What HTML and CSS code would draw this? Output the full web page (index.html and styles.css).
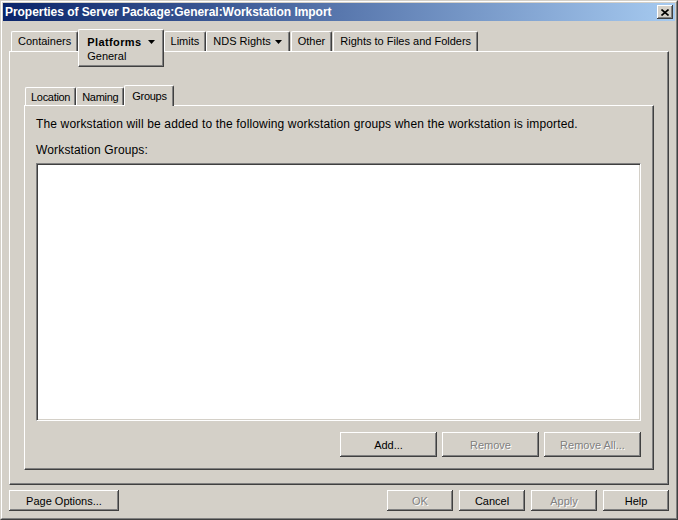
FILE: index.html
```html
<!DOCTYPE html>
<html lang="en">

<head>
  <meta charset="UTF-8">
  <title>Properties of Server Package:General:Workstation Import</title>
  <link rel="stylesheet" href="styles.css">
</head>

<body>
  <div class="window">
    <div class="window-frame">
      <div class="titlebar">
        <span class="title">Properties of Server Package:General:Workstation Import</span>
        <button class="close" type="button">
          <svg width="8" height="7" viewBox="0 0 8 7">
            <path d="M0.5 0.5 L7.5 6.5 M7.5 0.5 L0.5 6.5" stroke="#000" stroke-width="1.6" fill="none"/>
          </svg>
        </button>
      </div>

      <div class="content">
        <div class="tabs main-tabs">
          <div class="tab">Containers</div>
          <div class="tab active">
            <span class="tab-label">Platforms</span>
            <svg class="arrow" width="7" height="4" viewBox="0 0 7 4"><polygon points="0,0 7,0 3.5,4" fill="#000"/></svg>
            <div class="tab-menu">General</div>
          </div>
          <div class="tab">Limits</div>
          <div class="tab tab-drop">
            NDS Rights
            <svg class="arrow arrow-near" width="7" height="4" viewBox="0 0 7 4"><polygon points="0,0 7,0 3.5,4" fill="#000"/></svg>
          </div>
          <div class="tab tab-gap">Other</div>
          <div class="tab tab-gap">Rights to Files and Folders</div>
        </div>

        <div class="panel main-panel">
          <div class="tabs sub-tabs">
            <div class="tab">Location</div>
            <div class="tab">Naming</div>
            <div class="tab active">Groups</div>
          </div>

          <div class="panel sub-panel">
            <p class="intro">The workstation will be added to the following workstation groups when the workstation is imported.</p>
            <div class="field-label">Workstation Groups:</div>
            <div class="listbox"></div>
            <div class="list-buttons">
              <button class="btn btn-wide" type="button">Add...</button>
              <button class="btn btn-wide" type="button" disabled>Remove</button>
              <button class="btn btn-wide" type="button" disabled>Remove All...</button>
            </div>
          </div>
        </div>

        <div class="footer">
          <button class="btn btn-options" type="button">Page Options...</button>
          <div class="footer-right">
            <button class="btn" type="button" disabled>OK</button>
            <button class="btn" type="button">Cancel</button>
            <button class="btn" type="button" disabled>Apply</button>
            <button class="btn" type="button">Help</button>
          </div>
        </div>
      </div>
    </div>
  </div>
</body>

</html>
```

FILE: styles.css
```css
body {
  margin: 0;
  font-family: "Liberation Sans", Arial, sans-serif;
  font-size: 11px;
  line-height: 13px;
  color: #000000;
  background-color: #d4d0c8;
}

.window {
  width: 678px;
  height: 520px;
  box-sizing: border-box;
  background-color: #d4d0c8;
  border: 1px solid;
  border-color: #d4d0c8 #404040 #404040 #d4d0c8;
}

.window-frame {
  height: 100%;
  box-sizing: border-box;
  border: 1px solid;
  border-color: #ffffff #808080 #808080 #ffffff;
  padding: 1px;
  display: flex;
  flex-direction: column;
}

.titlebar {
  height: 18px;
  flex: none;
  display: flex;
  align-items: center;
  justify-content: space-between;
  padding: 0 2px;
  background: linear-gradient(to right, #0a246a, #a6caf0);
  color: #ffffff;
  font-size: 12px;
  font-weight: bold;
  letter-spacing: -0.05px;
}

.title {
  padding-top: 1px;
  white-space: nowrap;
}

.close {
  width: 16px;
  height: 14px;
  padding: 0;
  border: none;
  background-color: #d4d0c8;
  display: flex;
  align-items: center;
  justify-content: center;
  box-shadow: inset -1px -1px #404040, inset 1px 1px #ffffff, inset -2px -2px #808080;
}

.content {
  flex: 1;
  padding: 8px 6px 0;
  display: flex;
  flex-direction: column;
}

/* tabs */
.tabs {
  display: flex;
  align-items: flex-end;
  flex: none;
}

.main-tabs {
  height: 22px;
  padding-left: 2px;
}

.sub-tabs {
  height: 20px;
  padding-left: 1px;
  letter-spacing: -0.3px;
}

.tab {
  height: 20px;
  box-sizing: border-box;
  padding: 0 6px;
  display: flex;
  align-items: center;
  white-space: nowrap;
  background-color: #d4d0c8;
  border-top: 1px solid #ffffff;
  border-left: 1px solid #ffffff;
  border-right: 1px solid #404040;
  border-radius: 2px 2px 0 0;
  box-shadow: inset -1px 0 #808080;
}

.tab-gap {
  margin-left: 1px;
}

.tab-drop {
  padding-right: 7px;
}

.sub-tabs .tab {
  height: 18px;
  padding: 2px 5px 0;
}

.main-tabs .tab.active {
  position: relative;
  z-index: 1;
  height: 22px;
  align-items: flex-start;
  padding: 6px 8px 0 8px;
  font-weight: bold;
}

.tab-label {
  letter-spacing: 0.4px;
}

.sub-tabs .tab.active {
  position: relative;
  z-index: 1;
  height: 21px;
  margin-bottom: -1px;
  padding: 1px 6px 1px 7px;
}

.arrow {
  margin: 4px 0 0 6px;
}

.arrow-near {
  margin: 1px 0 0 4px;
}

.tab-menu {
  position: absolute;
  left: -1px;
  right: -1px;
  top: 21px;
  height: 15px;
  padding-left: 8px;
  line-height: 10px;
  font-weight: normal;
  background-color: #d4d0c8;
  border-left: 1px solid #ffffff;
  border-right: 1px solid #404040;
  border-bottom: 1px solid #404040;
  box-shadow: inset -1px -1px #808080;
}

/* panels */
.panel {
  box-sizing: border-box;
  background-color: #d4d0c8;
  border: 1px solid;
  border-color: #ffffff #404040 #404040 #ffffff;
  box-shadow: inset -1px -1px #808080;
}

.main-panel {
  height: 434px;
  padding: 33px 14px 14px;
  display: flex;
  flex-direction: column;
}

.sub-panel {
  height: 365px;
  padding: 11px 12px 12px 11px;
  display: flex;
  flex-direction: column;
  font-size: 12px;
  line-height: 14px;
  letter-spacing: 0.15px;
}

.intro {
  margin: 0;
  white-space: nowrap;
}

.field-label {
  margin-top: 12px;
}

.listbox {
  margin-top: 6px;
  height: 258px;
  box-sizing: border-box;
  background-color: #ffffff;
  border: 1px solid;
  border-color: #808080 #ffffff #ffffff #808080;
  box-shadow: inset 1px 1px #404040, inset -1px -1px #d4d0c8;
}

.list-buttons {
  margin-top: 11px;
  display: flex;
  justify-content: flex-end;
  gap: 5px;
}

/* buttons */
.btn {
  width: 66px;
  height: 21px;
  padding: 0;
  border: none;
  font-family: inherit;
  font-size: 11px;
  letter-spacing: 0;
  color: #000000;
  background-color: #d4d0c8;
  box-shadow: inset -1px -1px #404040, inset 1px 1px #ffffff, inset -2px -2px #808080;
}

.btn:disabled {
  color: #808080;
  text-shadow: 1px 1px 0 #ffffff;
}

.btn-wide {
  width: 97px;
  height: 25px;
}

.btn-options {
  width: 110px;
}

.footer {
  margin-top: 5px;
  display: flex;
  justify-content: space-between;
}

.footer-right {
  display: flex;
  gap: 6px;
}
```
